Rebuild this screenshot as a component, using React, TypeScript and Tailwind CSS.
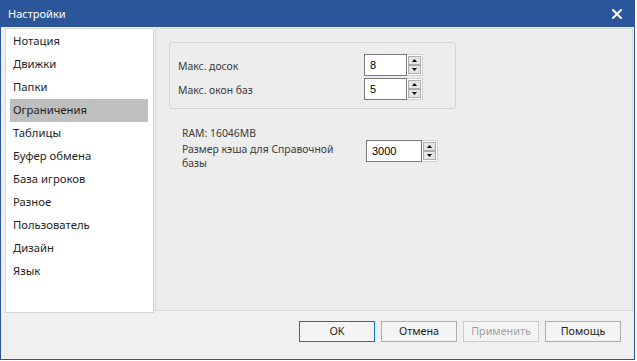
import type { ReactNode } from "react";

const items = [
  "Нотация",
  "Движки",
  "Папки",
  "Ограничения",
  "Таблицы",
  "Буфер обмена",
  "База игроков",
  "Разное",
  "Пользователь",
  "Дизайн",
  "Язык",
];

export default function App() {
  return (
    <div className="h-[361px] w-[637px] overflow-hidden bg-white font-['Noto_Sans',sans-serif]">
      <div className="flex h-[360px] w-[635px] flex-col border border-[#2b579a] bg-[#f0f0f0]">
        <header className="flex h-[26px] shrink-0 items-center justify-between bg-[#2b579a] pl-[7px] pr-[12px]">
          <span className="text-[11px] text-white">Настройки</span>
          <svg width="10" height="10" viewBox="0 0 10 10" className="mt-[-1px]">
            <path d="M1 1 L9 9 M9 1 L1 9" stroke="white" strokeWidth="2" strokeLinecap="square" />
          </svg>
        </header>

        <div className="mt-[1px] flex gap-[1px] pl-[4px] pr-[1px]">
          <nav className="h-[285px] w-[149px] shrink-0 border border-[#d6d6d6] bg-white pl-[4px] pt-[1px]">
            {items.map((label) => (
              <div
                key={label}
                className={
                  label === "Ограничения"
                    ? "flex h-[23px] w-[138px] items-center bg-[#bfbfbf] pl-[3px] text-[11.3px] text-[#1e1e1e]"
                    : "flex h-[23px] w-[138px] items-center pl-[3px] text-[11.3px] text-[#1e1e1e]"
                }
              >
                {label}
              </div>
            ))}
          </nav>

          <section className="h-[283px] flex-1 border border-[#d9d9d9] bg-[#ededed] pl-[13px] pt-[13px]">
            <div className="flex h-[67px] w-[287px] flex-col gap-[2px] rounded-[3px] border border-[#d3d3d3] pl-[8px] pt-[11px]">
              <Row label="Макс. досок">
                <Spin value="8" boxClass="w-[43px]" />
              </Row>
              <Row label="Макс. окон баз">
                <Spin value="5" boxClass="w-[43px]" />
              </Row>
            </div>

            <div className="ml-[13px] mt-[17px] text-[10.4px] leading-[14px] text-[#3a3a3a]">RAM: 16046MB</div>
            <div className="ml-[13px] flex">
              <div className="mt-[2px] w-[184px] text-[10.4px] leading-[14px] text-[#3a3a3a]">
                Размер кэша для Справочной
                <br />
                базы
              </div>
              <Spin value="3000" boxClass="w-[56px]" />
            </div>
          </section>
        </div>

        <footer className="mt-[8px] flex justify-end gap-[6px] pr-[13px]">
          <Button primary>OK</Button>
          <Button>Отмена</Button>
          <Button disabled>Применить</Button>
          <Button>Помощь</Button>
        </footer>
      </div>
    </div>
  );
}

function Row({ label, children }: { label: string; children: ReactNode }) {
  return (
    <div className="flex h-[22px] items-center">
      <span className="mt-[3px] w-[186px] text-[10.4px] text-[#3a3a3a]">{label}</span>
      {children}
    </div>
  );
}

function Spin({ value, boxClass }: { value: string; boxClass: string }) {
  return (
    <div className="flex h-[22px]">
      <div className={`flex items-center border border-[#7a7a7a] bg-white pl-[5px] font-['Liberation_Sans',sans-serif] text-[11px] text-black ${boxClass}`}>
        {value}
      </div>
      <div className="flex w-[16px] flex-col justify-between border-y border-r border-[#cfcfcf] bg-white p-[1px]">
        <Arrow up />
        <Arrow />
      </div>
    </div>
  );
}

function Arrow({ up }: { up?: boolean }) {
  return (
    <div className="flex h-[9px] items-center justify-center border border-[#adadad] bg-[#e5e5e5]">
      <svg width="5" height="3" viewBox="0 0 5 3">
        <path d={up ? "M0 3 L2.5 0 L5 3 Z" : "M0 0 L5 0 L2.5 3 Z"} fill="#000" />
      </svg>
    </div>
  );
}

function Button({ children, primary, disabled }: { children: ReactNode; primary?: boolean; disabled?: boolean }) {
  return (
    <button
      type="button"
      className={
        primary
          ? "flex h-[21px] w-[76px] items-center justify-center border border-[#0078d7] bg-[#f4f4f4] text-[10.8px] text-[#1e1e1e]"
          : disabled
            ? "flex h-[21px] w-[76px] items-center justify-center border border-[#cccccc] bg-[#f4f4f4] text-[10.8px] text-[#a0a0a0]"
            : "flex h-[21px] w-[76px] items-center justify-center border border-[#adadad] bg-[#f4f4f4] text-[10.8px] text-[#1e1e1e]"
      }
    >
      {children}
    </button>
  );
}
